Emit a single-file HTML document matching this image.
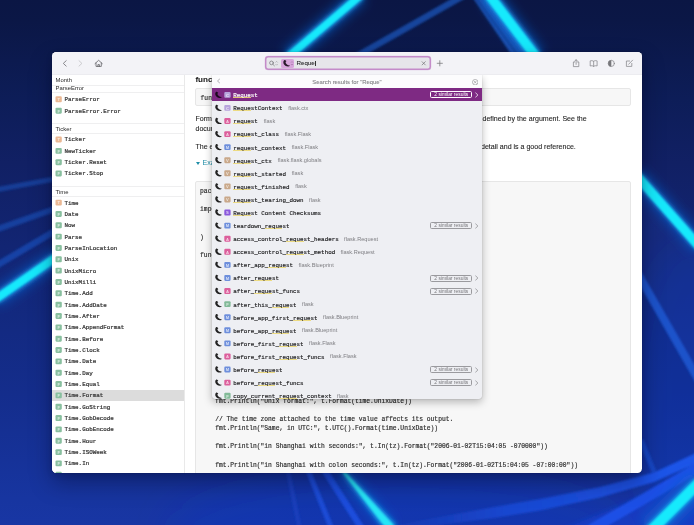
<!DOCTYPE html>
<html lang="en"><head><meta charset="utf-8"><title>Dash — Search results for "Reque"</title>
<style>
*{box-sizing:border-box}
html,body{margin:0;padding:0}
body{width:694px;height:525px;overflow:hidden;position:relative;background:#0f2890;font-family:"Liberation Sans",sans-serif}
.bg{position:absolute;left:0;top:0;display:block}
.win{position:absolute;left:52px;top:52px;width:590px;height:420.8px;border-radius:4.5px;background:#fff;overflow:hidden;box-shadow:0 10px 22px rgba(0,0,25,.34),0 2px 6px rgba(0,0,25,.14),0 0 1px rgba(0,0,0,.45)}
.abs{position:absolute;left:-52px;top:-52px;width:694px;height:525px;will-change:transform;opacity:.999}
.tb{position:absolute;left:52px;top:52px;width:590px;height:22.5px;background:#f3f3f7;border-bottom:0.6px solid #ececf0}
.tb svg{position:absolute;overflow:visible}
.srch{position:absolute;left:265px;top:56.4px;width:165.6px;height:14px;border-radius:3.2px;background:#e6e6ea;box-shadow:inset 0 0 0 1.45px #c48cc9,0 0 0 .3px rgba(197,143,202,.45)}
.tok{position:absolute;left:281.1px;top:59.1px;width:12.9px;height:8.5px;border-radius:1.6px;background:#d8a6dc}
.q{position:absolute;left:296.5px;top:59.4px;font-size:6.2px;line-height:8px;color:#1c1c1e;-webkit-text-stroke:.06px #222;white-space:nowrap}
.cur{position:absolute;left:314.7px;top:60.5px;width:.55px;height:5.9px;background:rgba(20,20,20,.85)}
.sb{position:absolute;left:52px;top:74.5px;width:132.6px;height:400px;border-right:0.8px solid #e9e9e9;background:#fff}
.sh{position:absolute;left:55.6px;font-size:5.9px;line-height:8px;height:8px;color:#2a2a2a;white-space:nowrap}
.sp{position:absolute;left:52px;width:132px;height:.8px;background:#efeff0}
.si{position:absolute;left:55.6px;height:10px;line-height:10px;white-space:nowrap;font-family:"Liberation Mono",monospace;font-size:5.85px;color:#3a3a3a}
.si span{position:absolute;left:9px;top:.8px;-webkit-text-stroke:.24px #363636}
.ico{position:absolute;left:0;top:0;overflow:hidden}
.ico text{font:bold 4.1px "Liberation Sans",sans-serif;fill:#fff;fill-opacity:.72;text-anchor:middle}
.ssel{position:absolute;left:52px;width:132.2px;height:10.7px;background:#dcdcdc}
.h3{position:absolute;font-weight:bold;font-size:8.1px;line-height:10px;color:#111;white-space:nowrap}
.box{position:absolute;background:#f7f7f7;border:.7px solid #e6e6e6;border-radius:2px;overflow:hidden}
.code{position:absolute;margin:0;font-family:"Liberation Mono",monospace;font-size:6.31px;line-height:9.13px;color:#2c2c2c;-webkit-text-stroke:.17px #2c2c2c;white-space:pre}
.p{position:absolute;font-size:7.05px;line-height:10.5px;color:#1e1e1e;-webkit-text-stroke:.1px #1e1e1e;white-space:nowrap}
.ex{position:absolute;font-size:7.05px;line-height:10.5px;color:#1f8ea8;white-space:nowrap;padding-left:7px}
.tri{position:absolute;left:0;top:3.7px;width:0;height:0;border-left:2.1px solid transparent;border-right:2.1px solid transparent;border-top:3.7px solid #1f8ea8}
.pop{position:absolute;left:212px;top:75px;width:270px;height:323.5px;background:#eeeff3;overflow:hidden;box-shadow:0 3px 9px rgba(0,0,0,.28),0 0 1px rgba(0,0,0,.35);border-radius:0 0 3px 3px}
.ph{position:absolute;left:0;top:0;width:270px;height:13.3px;background:#fcfcfd}
.pt{position:absolute;left:0;top:2.9px;width:270px;text-align:center;font-size:5.9px;line-height:8px;color:#828286;-webkit-text-stroke:.08px #828286;white-space:nowrap}
.pr{position:absolute;left:0;width:270px;height:13.08px;white-space:nowrap;color:#1d1d1f}
.pr.sel{background:#7e2a83;color:#fff}
.fl{position:absolute;left:2.9px;top:3.3px;width:7.2px;height:6.4px}
.pr.sel .fl path{fill:#1a0a1c}
.pi{left:12.2px;top:3.5px;width:6.4px;height:6px}
.pn{position:absolute;left:21.2px;top:3.9px;font-family:"Liberation Mono",monospace;font-weight:normal;-webkit-text-stroke:.16px currentColor;font-size:5.86px;line-height:8px}
.pn u{text-decoration:none;background:linear-gradient(#ecd874,#ecd874) 0 5.05px/100% .9px no-repeat}
.ps{position:absolute;top:2.6px;font-size:5.6px;line-height:8px;color:#7e7e82}
.sim{position:absolute;left:218.3px;top:3.1px;width:42px;height:7px;border:.6px solid #9a9a9e;border-radius:1.6px;font-size:4.9px;line-height:5.7px;text-align:center;color:#77777b}
.pr.sel .sim{border-color:#fff;color:#fff}
.chv{position:absolute;left:263.2px;top:3.6px;width:3.4px;height:6px;color:#8a8a8e}
.pr.sel .chv{color:#fff}
</style></head>
<body>

<svg class="bg" width="694" height="525" viewBox="0 0 694 525">
<defs>
<linearGradient id="g0" x1="0" y1="0" x2="0" y2="525" gradientUnits="userSpaceOnUse">
<stop offset="0" stop-color="#0b1644"/>
<stop offset="0.04" stop-color="#0b1746"/>
<stop offset="0.19" stop-color="#0d1d58"/>
<stop offset="0.31" stop-color="#112064"/>
<stop offset="0.63" stop-color="#132a82"/>
<stop offset="0.75" stop-color="#142d8c"/>
<stop offset="0.95" stop-color="#1735a0"/>
<stop offset="1" stop-color="#1836a4"/>
</linearGradient>
<linearGradient id="gb1" x1="380" y1="0" x2="660" y2="0" gradientUnits="userSpaceOnUse"><stop offset="0" stop-color="#1a44c0" stop-opacity=".15"/><stop offset=".45" stop-color="#1a4ad6" stop-opacity=".85"/><stop offset="1" stop-color="#1c54e8"/></linearGradient>
<filter id="b5" x="-50%" y="-50%" width="200%" height="200%"><feGaussianBlur stdDeviation="18"/></filter>
<filter id="b1" x="-30%" y="-30%" width="160%" height="160%"><feGaussianBlur stdDeviation="0.9"/></filter>
<filter id="b2" x="-50%" y="-50%" width="200%" height="200%"><feGaussianBlur stdDeviation="6"/></filter>
<filter id="b4" x="-50%" y="-50%" width="200%" height="200%"><feGaussianBlur stdDeviation="2.2"/></filter>
<filter id="b3" x="-30%" y="-30%" width="160%" height="160%"><feGaussianBlur stdDeviation="0.8"/></filter>
</defs>
<rect width="694" height="525" fill="url(#g0)"/>
<ellipse cx="400" cy="535" rx="230" ry="60" fill="#0f38d8" fill-opacity=".22" filter="url(#b5)"/>
<ellipse cx="694" cy="400" rx="60" ry="160" fill="#0f38d8" fill-opacity=".18" filter="url(#b5)"/>
<!-- dim beams -->
<g filter="url(#b1)" stroke-linecap="butt" fill="none">
<line x1="470" y1="-8" x2="350" y2="60" stroke="#17459c" stroke-width="6.5"/>
<polygon points="473,-2 493,-2 535,54 511,54" fill="#1a4fae" stroke="none"/>
<line x1="476" y1="-2" x2="517" y2="54" stroke="#123a8c" stroke-width="1.6"/>
<line x1="-5" y1="190" x2="60" y2="178" stroke="#163c96" stroke-width="5"/>
<line x1="-5" y1="230" x2="60" y2="207" stroke="#173f9e" stroke-width="6"/>
<line x1="-5" y1="266.5" x2="60" y2="228" stroke="#1842a6" stroke-width="6.5"/>
<polygon points="636,266 700,378 700,250 636,180" fill="#2050c8" fill-opacity=".16" stroke="none"/>
<line x1="636" y1="270.5" x2="700" y2="382.5" stroke="#1d52ca" stroke-width="8"/>
<line x1="641" y1="440" x2="654" y2="472" stroke="#1846c4" stroke-width="5"/>
<polygon points="700,451 700,462 654,482 600,497.5 540,510.5 494,518 400,530 370,530 494,507 540,499 600,487 654,472.5" fill="url(#gb1)" stroke="none"/>
<polygon points="700,472 700,530 560,530" fill="#1246e4" fill-opacity=".4" stroke="none" filter="url(#b4)"/>
<line x1="700" y1="466.5" x2="590" y2="530" stroke="#1b50e6" stroke-width="10.5"/>
<line x1="287" y1="466" x2="300" y2="530" stroke="#1a44c4" stroke-opacity=".6" stroke-width="4.5"/>
<line x1="306.4" y1="466" x2="332.1" y2="530" stroke="#1b4cd6" stroke-width="5.2"/>
<line x1="321.9" y1="466" x2="362.7" y2="530" stroke="#1c4edc" stroke-width="6.4"/>
</g>
<!-- outer glow -->
<g filter="url(#b2)" fill="none" stroke="#125fd0" stroke-opacity="0.7">
<line x1="361" y1="-5" x2="288" y2="57" stroke-width="15"/>
<line x1="489" y1="-5" x2="536.2" y2="57" stroke-width="18"/>
<line x1="-5" y1="299.5" x2="60" y2="255" stroke-width="16"/>
<line x1="636" y1="175" x2="700" y2="247" stroke-width="16"/>
<line x1="343" y1="472" x2="389.5" y2="526" stroke-width="12"/>
<line x1="700" y1="481.7" x2="650" y2="531.7" stroke-width="28"/>
</g>
<!-- inner glow -->
<g filter="url(#b4)" fill="none" stroke="#189ae8" stroke-opacity="0.9">
<line x1="361" y1="-5" x2="288" y2="57" stroke-width="10"/>
<line x1="489" y1="-5" x2="536.2" y2="57" stroke-width="12.5"/>
<line x1="-5" y1="299.5" x2="60" y2="255" stroke-width="10"/>
<line x1="636" y1="175" x2="700" y2="247" stroke-width="10"/>
<polygon points="341,472 346.4,472 398,526 381,526" fill="#189ae8" fill-opacity=".9" stroke="none"/>
<line x1="700" y1="481.7" x2="650" y2="531.7" stroke-width="14"/>
</g>
<!-- bright cores -->
<g filter="url(#b3)" fill="none" stroke="#14eafc">
<line x1="361" y1="-5" x2="288" y2="57" stroke-width="7.2"/>
<line x1="489" y1="-5" x2="536.2" y2="57" stroke-width="9.4"/>
<line x1="-5" y1="299.5" x2="60" y2="254.5" stroke-width="8"/>
<line x1="636" y1="175" x2="700" y2="247.5" stroke-width="9"/>
<polygon points="342.2,472 345.3,472 395,526.5 384.6,526.5" fill="#28e6f6" stroke="none"/>
<line x1="700" y1="481.7" x2="650" y2="531.7" stroke-width="10.5"/>
</g>
</svg>

<div class="win"><div class="abs">
<div class="sb"></div>
<div class="sh" style="top:76.40px">Month</div>
<div class="sp" style="top:84.60px"></div>
<div class="sh" style="top:84.20px">ParseError</div>
<div class="sp" style="top:91.90px"></div>
<div class="si" style="top:94.30px"><span style="top:0.66px">ParseError</span></div>
<div class="si" style="top:105.70px"><span style="top:1.26px">ParseError.Error</span></div>
<div class="sp" style="top:123.00px"></div>
<div class="sh" style="top:124.60px">Ticker</div>
<div class="sp" style="top:133.00px"></div>
<div class="si" style="top:134.50px"><span style="top:0.46px">Ticker</span></div>
<div class="si" style="top:145.84px"><span style="top:1.12px">NewTicker</span></div>
<div class="si" style="top:157.18px"><span style="top:0.78px">Ticker.Reset</span></div>
<div class="si" style="top:168.52px"><span style="top:0.44px">Ticker.Stop</span></div>
<div class="sp" style="top:186.00px"></div>
<div class="sh" style="top:187.80px">Time</div>
<div class="sp" style="top:195.90px"></div>
<div class="si" style="top:197.60px"><span style="top:1.36px">Time</span></div>
<div class="si" style="top:208.94px"><span style="top:1.02px">Date</span></div>
<div class="si" style="top:220.28px"><span style="top:0.68px">Now</span></div>
<div class="si" style="top:231.62px"><span style="top:1.34px">Parse</span></div>
<div class="si" style="top:242.96px"><span style="top:1.00px">ParseInLocation</span></div>
<div class="si" style="top:254.30px"><span style="top:0.66px">Unix</span></div>
<div class="si" style="top:265.64px"><span style="top:1.32px">UnixMicro</span></div>
<div class="si" style="top:276.98px"><span style="top:0.98px">UnixMilli</span></div>
<div class="si" style="top:288.32px"><span style="top:0.64px">Time.Add</span></div>
<div class="si" style="top:299.66px"><span style="top:1.30px">Time.AddDate</span></div>
<div class="si" style="top:311.00px"><span style="top:0.96px">Time.After</span></div>
<div class="si" style="top:322.34px"><span style="top:0.62px">Time.AppendFormat</span></div>
<div class="si" style="top:333.68px"><span style="top:1.28px">Time.Before</span></div>
<div class="si" style="top:345.02px"><span style="top:0.94px">Time.Clock</span></div>
<div class="si" style="top:356.36px"><span style="top:0.60px">Time.Date</span></div>
<div class="si" style="top:367.70px"><span style="top:1.26px">Time.Day</span></div>
<div class="si" style="top:379.04px"><span style="top:0.92px">Time.Equal</span></div>
<div class="ssel" style="top:389.98px"></div>
<div class="si" style="top:390.38px"><span style="top:0.58px">Time.Format</span></div>
<div class="si" style="top:401.72px"><span style="top:1.24px">Time.GoString</span></div>
<div class="si" style="top:413.06px"><span style="top:0.90px">Time.GobDecode</span></div>
<div class="si" style="top:424.40px"><span style="top:0.56px">Time.GobEncode</span></div>
<div class="si" style="top:435.74px"><span style="top:1.22px">Time.Hour</span></div>
<div class="si" style="top:447.08px"><span style="top:0.88px">Time.ISOWeek</span></div>
<div class="si" style="top:458.42px"><span style="top:0.54px">Time.In</span></div>
<div class="si" style="top:469.76px"><span style="top:1.20px">Time.IsDST</span></div>
<svg class="ico" width="190" height="525" viewBox="0 0 190 525"><rect x="55.5" y="96.35" width="6.3" height="5.9" rx="1.1" fill="#eab894"/><text x="58.65" y="101.15">T</text><rect x="55.5" y="107.75" width="6.3" height="5.9" rx="1.1" fill="#88bf9f"/><text x="58.65" y="112.55">F</text><rect x="55.5" y="136.55" width="6.3" height="5.9" rx="1.1" fill="#eab894"/><text x="58.65" y="141.35">T</text><rect x="55.5" y="147.89" width="6.3" height="5.9" rx="1.1" fill="#88bf9f"/><text x="58.65" y="152.69">F</text><rect x="55.5" y="159.23" width="6.3" height="5.9" rx="1.1" fill="#88bf9f"/><text x="58.65" y="164.03">F</text><rect x="55.5" y="170.57" width="6.3" height="5.9" rx="1.1" fill="#88bf9f"/><text x="58.65" y="175.37">F</text><rect x="55.5" y="199.65" width="6.3" height="5.9" rx="1.1" fill="#eab894"/><text x="58.65" y="204.45">T</text><rect x="55.5" y="210.99" width="6.3" height="5.9" rx="1.1" fill="#88bf9f"/><text x="58.65" y="215.79">F</text><rect x="55.5" y="222.33" width="6.3" height="5.9" rx="1.1" fill="#88bf9f"/><text x="58.65" y="227.13">F</text><rect x="55.5" y="233.67" width="6.3" height="5.9" rx="1.1" fill="#88bf9f"/><text x="58.65" y="238.47">F</text><rect x="55.5" y="245.01" width="6.3" height="5.9" rx="1.1" fill="#88bf9f"/><text x="58.65" y="249.81">F</text><rect x="55.5" y="256.35" width="6.3" height="5.9" rx="1.1" fill="#88bf9f"/><text x="58.65" y="261.15">F</text><rect x="55.5" y="267.69" width="6.3" height="5.9" rx="1.1" fill="#88bf9f"/><text x="58.65" y="272.49">F</text><rect x="55.5" y="279.03" width="6.3" height="5.9" rx="1.1" fill="#88bf9f"/><text x="58.65" y="283.83">F</text><rect x="55.5" y="290.37" width="6.3" height="5.9" rx="1.1" fill="#88bf9f"/><text x="58.65" y="295.17">F</text><rect x="55.5" y="301.71" width="6.3" height="5.9" rx="1.1" fill="#88bf9f"/><text x="58.65" y="306.51">F</text><rect x="55.5" y="313.05" width="6.3" height="5.9" rx="1.1" fill="#88bf9f"/><text x="58.65" y="317.85">F</text><rect x="55.5" y="324.39" width="6.3" height="5.9" rx="1.1" fill="#88bf9f"/><text x="58.65" y="329.19">F</text><rect x="55.5" y="335.73" width="6.3" height="5.9" rx="1.1" fill="#88bf9f"/><text x="58.65" y="340.53">F</text><rect x="55.5" y="347.07" width="6.3" height="5.9" rx="1.1" fill="#88bf9f"/><text x="58.65" y="351.87">F</text><rect x="55.5" y="358.41" width="6.3" height="5.9" rx="1.1" fill="#88bf9f"/><text x="58.65" y="363.21">F</text><rect x="55.5" y="369.75" width="6.3" height="5.9" rx="1.1" fill="#88bf9f"/><text x="58.65" y="374.55">F</text><rect x="55.5" y="381.09" width="6.3" height="5.9" rx="1.1" fill="#88bf9f"/><text x="58.65" y="385.89">F</text><rect x="55.5" y="392.43" width="6.3" height="5.9" rx="1.1" fill="#88bf9f"/><text x="58.65" y="397.23">F</text><rect x="55.5" y="403.77" width="6.3" height="5.9" rx="1.1" fill="#88bf9f"/><text x="58.65" y="408.57">F</text><rect x="55.5" y="415.11" width="6.3" height="5.9" rx="1.1" fill="#88bf9f"/><text x="58.65" y="419.91">F</text><rect x="55.5" y="426.45" width="6.3" height="5.9" rx="1.1" fill="#88bf9f"/><text x="58.65" y="431.25">F</text><rect x="55.5" y="437.79" width="6.3" height="5.9" rx="1.1" fill="#88bf9f"/><text x="58.65" y="442.59">F</text><rect x="55.5" y="449.13" width="6.3" height="5.9" rx="1.1" fill="#88bf9f"/><text x="58.65" y="453.93">F</text><rect x="55.5" y="460.47" width="6.3" height="5.9" rx="1.1" fill="#88bf9f"/><text x="58.65" y="465.27">F</text><rect x="55.5" y="471.81" width="6.3" height="5.9" rx="1.1" fill="#88bf9f"/><text x="58.65" y="476.61">F</text></svg>

<div class="h3" style="left:195.4px;top:74.6px">func (Time) Format</div>
<div class="box" style="left:195.2px;top:88px;width:436.3px;height:18.3px"><pre class="code" style="left:4.4px;top:4.6px">func (t Time) Format(layout string) string</pre></div>
<div class="p" style="left:195.5px;top:114.3px">Format returns a textual representation of the time value formatted according to the layout</div>
<div class="p" style="left:482.5px;top:114.3px">defined by the argument. See the</div>
<div class="p" style="left:195.5px;top:123.9px">documentation for the constant called Layout to see how to represent the layout format.</div>
<div class="p" style="left:195.5px;top:141.6px">The executable example for Time.Format demonstrates the working of the layout string in</div>
<div class="p" style="left:481px;top:141.6px">detail and is a good reference.</div>
<div class="ex" style="left:195.6px;top:158.1px"><span class="tri"></span>Example</div>
<div class="box" style="left:195.2px;top:180.5px;width:436.3px;height:320px"><pre class="code" style="left:3.9px;top:5.4px">package main

import (
    "fmt"
    "time"
)

func main() {
    // Parse a time value from a string in the standard Unix format.
    t, err := time.Parse(time.UnixDate, "Wed Feb 25 11:06:39 PST 2015")
    if err != nil { // Always check errors even if they should not happen.
        panic(err)
    }

    tz, err := time.LoadLocation("Asia/Shanghai")
    if err != nil { // Always check errors even if they should not happen.
        panic(err)
    }

    // time.Time's Stringer method is useful without any format.
    fmt.Println("default format:", t)

    // Predefined constants in the package implement common layouts.
    fmt.Println("Unix format:", t.Format(time.UnixDate))

    // The time zone attached to the time value affects its output.
    fmt.Println("Same, in UTC:", t.UTC().Format(time.UnixDate))

    fmt.Println("in Shanghai with seconds:", t.In(tz).Format("2006-01-02T15:04:05 -070000"))

    fmt.Println("in Shanghai with colon seconds:", t.In(tz).Format("2006-01-02T15:04:05 -07:00:00"))

    // The rest of this function demonstrates the properties of the</pre></div>

<div class="pop">
<div class="ph"></div>
<svg style="position:absolute;left:4.6px;top:3.4px;width:3.4px;height:6px" viewBox="0 0 6 10"><path d="M5 1 L1 5 L5 9" fill="none" stroke="#8a8a8e" stroke-width="1.2" stroke-linecap="round" stroke-linejoin="round"/></svg>
<div class="pt">Search results for "Reque"</div>
<svg style="position:absolute;left:259.6px;top:3.6px;width:6.4px;height:6.4px" viewBox="0 0 10 10"><circle cx="5" cy="5" r="4.3" fill="none" stroke="#8a8a8e" stroke-width=".9"/><path d="M3.4 3.4 L6.6 6.6 M6.6 3.4 L3.4 6.6" stroke="#8a8a8e" stroke-width=".9" stroke-linecap="round"/></svg>
<div class="pr sel" style="top:13.30px"><span class="pn" style="top:3.66px"><u>Reque</u>st</span><span class="sim">2 similar results</span><svg class="chv" viewBox="0 0 6 10"><path d="M1 1 L5 5 L1 9" fill="none" stroke="currentColor" stroke-width="1.3" stroke-linecap="round" stroke-linejoin="round"/></svg></div>
<div class="pr" style="top:26.38px"><span class="pn" style="top:3.58px"><u>Reque</u>stContext</span><span class="ps" style="left:76.2px">flask.ctx</span></div>
<div class="pr" style="top:39.46px"><span class="pn" style="top:3.50px"><u>reque</u>st</span><span class="ps" style="left:51.7px">flask</span></div>
<div class="pr" style="top:52.54px"><span class="pn" style="top:3.42px"><u>reque</u>st_class</span><span class="ps" style="left:72.7px">flask.Flask</span></div>
<div class="pr" style="top:65.62px"><span class="pn" style="top:4.34px"><u>reque</u>st_context</span><span class="ps" style="left:79.7px">flask.Flask</span></div>
<div class="pr" style="top:78.70px"><span class="pn" style="top:4.26px"><u>reque</u>st_ctx</span><span class="ps" style="left:65.7px">flask.flask.globals</span></div>
<div class="pr" style="top:91.78px"><span class="pn" style="top:4.18px"><u>reque</u>st_started</span><span class="ps" style="left:79.7px">flask</span></div>
<div class="pr" style="top:104.86px"><span class="pn" style="top:4.10px"><u>reque</u>st_finished</span><span class="ps" style="left:83.2px">flask</span></div>
<div class="pr" style="top:117.94px"><span class="pn" style="top:4.02px"><u>reque</u>st_tearing_down</span><span class="ps" style="left:97.1px">flask</span></div>
<div class="pr" style="top:131.02px"><span class="pn" style="top:3.94px"><u>Reque</u>st Content Checksums</span></div>
<div class="pr" style="top:144.10px"><span class="pn" style="top:3.86px">teardown_<u>reque</u>st</span><span class="sim">2 similar results</span><svg class="chv" viewBox="0 0 6 10"><path d="M1 1 L5 5 L1 9" fill="none" stroke="currentColor" stroke-width="1.3" stroke-linecap="round" stroke-linejoin="round"/></svg></div>
<div class="pr" style="top:157.18px"><span class="pn" style="top:3.78px">access_control_<u>reque</u>st_headers</span><span class="ps" style="left:132.1px">flask.Request</span></div>
<div class="pr" style="top:170.26px"><span class="pn" style="top:3.70px">access_control_<u>reque</u>st_method</span><span class="ps" style="left:128.6px">flask.Request</span></div>
<div class="pr" style="top:183.34px"><span class="pn" style="top:3.62px">after_app_<u>reque</u>st</span><span class="ps" style="left:86.6px">flask.Blueprint</span></div>
<div class="pr" style="top:196.42px"><span class="pn" style="top:3.54px">after_<u>reque</u>st</span><span class="sim">2 similar results</span><svg class="chv" viewBox="0 0 6 10"><path d="M1 1 L5 5 L1 9" fill="none" stroke="currentColor" stroke-width="1.3" stroke-linecap="round" stroke-linejoin="round"/></svg></div>
<div class="pr" style="top:209.50px"><span class="pn" style="top:3.46px">after_<u>reque</u>st_funcs</span><span class="sim">2 similar results</span><svg class="chv" viewBox="0 0 6 10"><path d="M1 1 L5 5 L1 9" fill="none" stroke="currentColor" stroke-width="1.3" stroke-linecap="round" stroke-linejoin="round"/></svg></div>
<div class="pr" style="top:222.58px"><span class="pn" style="top:4.38px">after_this_<u>reque</u>st</span><span class="ps" style="left:90.1px">flask</span></div>
<div class="pr" style="top:235.66px"><span class="pn" style="top:4.30px">before_app_first_<u>reque</u>st</span><span class="ps" style="left:111.1px">flask.Blueprint</span></div>
<div class="pr" style="top:248.74px"><span class="pn" style="top:4.22px">before_app_<u>reque</u>st</span><span class="ps" style="left:90.1px">flask.Blueprint</span></div>
<div class="pr" style="top:261.82px"><span class="pn" style="top:4.14px">before_first_<u>reque</u>st</span><span class="ps" style="left:97.1px">flask.Flask</span></div>
<div class="pr" style="top:274.90px"><span class="pn" style="top:4.06px">before_first_<u>reque</u>st_funcs</span><span class="ps" style="left:118.1px">flask.Flask</span></div>
<div class="pr" style="top:287.98px"><span class="pn" style="top:3.98px">before_<u>reque</u>st</span><span class="sim">2 similar results</span><svg class="chv" viewBox="0 0 6 10"><path d="M1 1 L5 5 L1 9" fill="none" stroke="currentColor" stroke-width="1.3" stroke-linecap="round" stroke-linejoin="round"/></svg></div>
<div class="pr" style="top:301.06px"><span class="pn" style="top:3.90px">before_<u>reque</u>st_funcs</span><span class="sim">2 similar results</span><svg class="chv" viewBox="0 0 6 10"><path d="M1 1 L5 5 L1 9" fill="none" stroke="currentColor" stroke-width="1.3" stroke-linecap="round" stroke-linejoin="round"/></svg></div>
<div class="pr" style="top:314.14px"><span class="pn" style="top:3.82px">copy_current_<u>reque</u>st_context</span><span class="ps" style="left:125.1px">flask</span></div>
<svg class="ico" width="270" height="324" viewBox="0 0 270 324"><path transform="translate(2.9 16.64) scale(.1)" fill="#1a0a1c" d="M15 0C22 0 30 6 34 13C31 15 27 17 25 21C27 33 38 47 52 50C58 51.5 64 52 70 54C66 60 58 63 50 63C30 63 12 52 6 36C3 28 2 20 5 12C7 6 10 1 15 0Z"/><rect x="12.3" y="16.89" width="6.3" height="5.9" rx="1.1" fill="#b7a4dc"/><text x="15.45" y="21.69">C</text><path transform="translate(2.9 29.72) scale(.1)" fill="#222" d="M15 0C22 0 30 6 34 13C31 15 27 17 25 21C27 33 38 47 52 50C58 51.5 64 52 70 54C66 60 58 63 50 63C30 63 12 52 6 36C3 28 2 20 5 12C7 6 10 1 15 0Z"/><rect x="12.3" y="29.97" width="6.3" height="5.9" rx="1.1" fill="#b7a4dc"/><text x="15.45" y="34.77">C</text><path transform="translate(2.9 42.80) scale(.1)" fill="#222" d="M15 0C22 0 30 6 34 13C31 15 27 17 25 21C27 33 38 47 52 50C58 51.5 64 52 70 54C66 60 58 63 50 63C30 63 12 52 6 36C3 28 2 20 5 12C7 6 10 1 15 0Z"/><rect x="12.3" y="43.05" width="6.3" height="5.9" rx="1.1" fill="#dc5f9c"/><text x="15.45" y="47.85">A</text><path transform="translate(2.9 55.88) scale(.1)" fill="#222" d="M15 0C22 0 30 6 34 13C31 15 27 17 25 21C27 33 38 47 52 50C58 51.5 64 52 70 54C66 60 58 63 50 63C30 63 12 52 6 36C3 28 2 20 5 12C7 6 10 1 15 0Z"/><rect x="12.3" y="56.13" width="6.3" height="5.9" rx="1.1" fill="#dc5f9c"/><text x="15.45" y="60.93">A</text><path transform="translate(2.9 68.96) scale(.1)" fill="#222" d="M15 0C22 0 30 6 34 13C31 15 27 17 25 21C27 33 38 47 52 50C58 51.5 64 52 70 54C66 60 58 63 50 63C30 63 12 52 6 36C3 28 2 20 5 12C7 6 10 1 15 0Z"/><rect x="12.3" y="69.21" width="6.3" height="5.9" rx="1.1" fill="#6e8fdc"/><text x="15.45" y="74.01">M</text><path transform="translate(2.9 82.04) scale(.1)" fill="#222" d="M15 0C22 0 30 6 34 13C31 15 27 17 25 21C27 33 38 47 52 50C58 51.5 64 52 70 54C66 60 58 63 50 63C30 63 12 52 6 36C3 28 2 20 5 12C7 6 10 1 15 0Z"/><rect x="12.3" y="82.29" width="6.3" height="5.9" rx="1.1" fill="#c9a88a"/><text x="15.45" y="87.09">V</text><path transform="translate(2.9 95.12) scale(.1)" fill="#222" d="M15 0C22 0 30 6 34 13C31 15 27 17 25 21C27 33 38 47 52 50C58 51.5 64 52 70 54C66 60 58 63 50 63C30 63 12 52 6 36C3 28 2 20 5 12C7 6 10 1 15 0Z"/><rect x="12.3" y="95.37" width="6.3" height="5.9" rx="1.1" fill="#c9a88a"/><text x="15.45" y="100.17">V</text><path transform="translate(2.9 108.20) scale(.1)" fill="#222" d="M15 0C22 0 30 6 34 13C31 15 27 17 25 21C27 33 38 47 52 50C58 51.5 64 52 70 54C66 60 58 63 50 63C30 63 12 52 6 36C3 28 2 20 5 12C7 6 10 1 15 0Z"/><rect x="12.3" y="108.45" width="6.3" height="5.9" rx="1.1" fill="#c9a88a"/><text x="15.45" y="113.25">V</text><path transform="translate(2.9 121.28) scale(.1)" fill="#222" d="M15 0C22 0 30 6 34 13C31 15 27 17 25 21C27 33 38 47 52 50C58 51.5 64 52 70 54C66 60 58 63 50 63C30 63 12 52 6 36C3 28 2 20 5 12C7 6 10 1 15 0Z"/><rect x="12.3" y="121.53" width="6.3" height="5.9" rx="1.1" fill="#c9a88a"/><text x="15.45" y="126.33">V</text><path transform="translate(2.9 134.36) scale(.1)" fill="#222" d="M15 0C22 0 30 6 34 13C31 15 27 17 25 21C27 33 38 47 52 50C58 51.5 64 52 70 54C66 60 58 63 50 63C30 63 12 52 6 36C3 28 2 20 5 12C7 6 10 1 15 0Z"/><rect x="12.3" y="134.61" width="6.3" height="5.9" rx="1.1" fill="#8a58dc"/><text x="15.45" y="139.41">S</text><path transform="translate(2.9 147.44) scale(.1)" fill="#222" d="M15 0C22 0 30 6 34 13C31 15 27 17 25 21C27 33 38 47 52 50C58 51.5 64 52 70 54C66 60 58 63 50 63C30 63 12 52 6 36C3 28 2 20 5 12C7 6 10 1 15 0Z"/><rect x="12.3" y="147.69" width="6.3" height="5.9" rx="1.1" fill="#6e8fdc"/><text x="15.45" y="152.49">M</text><path transform="translate(2.9 160.52) scale(.1)" fill="#222" d="M15 0C22 0 30 6 34 13C31 15 27 17 25 21C27 33 38 47 52 50C58 51.5 64 52 70 54C66 60 58 63 50 63C30 63 12 52 6 36C3 28 2 20 5 12C7 6 10 1 15 0Z"/><rect x="12.3" y="160.77" width="6.3" height="5.9" rx="1.1" fill="#dc5f9c"/><text x="15.45" y="165.57">A</text><path transform="translate(2.9 173.60) scale(.1)" fill="#222" d="M15 0C22 0 30 6 34 13C31 15 27 17 25 21C27 33 38 47 52 50C58 51.5 64 52 70 54C66 60 58 63 50 63C30 63 12 52 6 36C3 28 2 20 5 12C7 6 10 1 15 0Z"/><rect x="12.3" y="173.85" width="6.3" height="5.9" rx="1.1" fill="#dc5f9c"/><text x="15.45" y="178.65">A</text><path transform="translate(2.9 186.68) scale(.1)" fill="#222" d="M15 0C22 0 30 6 34 13C31 15 27 17 25 21C27 33 38 47 52 50C58 51.5 64 52 70 54C66 60 58 63 50 63C30 63 12 52 6 36C3 28 2 20 5 12C7 6 10 1 15 0Z"/><rect x="12.3" y="186.93" width="6.3" height="5.9" rx="1.1" fill="#6e8fdc"/><text x="15.45" y="191.73">M</text><path transform="translate(2.9 199.76) scale(.1)" fill="#222" d="M15 0C22 0 30 6 34 13C31 15 27 17 25 21C27 33 38 47 52 50C58 51.5 64 52 70 54C66 60 58 63 50 63C30 63 12 52 6 36C3 28 2 20 5 12C7 6 10 1 15 0Z"/><rect x="12.3" y="200.01" width="6.3" height="5.9" rx="1.1" fill="#6e8fdc"/><text x="15.45" y="204.81">M</text><path transform="translate(2.9 212.84) scale(.1)" fill="#222" d="M15 0C22 0 30 6 34 13C31 15 27 17 25 21C27 33 38 47 52 50C58 51.5 64 52 70 54C66 60 58 63 50 63C30 63 12 52 6 36C3 28 2 20 5 12C7 6 10 1 15 0Z"/><rect x="12.3" y="213.09" width="6.3" height="5.9" rx="1.1" fill="#dc5f9c"/><text x="15.45" y="217.89">A</text><path transform="translate(2.9 225.92) scale(.1)" fill="#222" d="M15 0C22 0 30 6 34 13C31 15 27 17 25 21C27 33 38 47 52 50C58 51.5 64 52 70 54C66 60 58 63 50 63C30 63 12 52 6 36C3 28 2 20 5 12C7 6 10 1 15 0Z"/><rect x="12.3" y="226.17" width="6.3" height="5.9" rx="1.1" fill="#82ba98"/><text x="15.45" y="230.97">F</text><path transform="translate(2.9 239.00) scale(.1)" fill="#222" d="M15 0C22 0 30 6 34 13C31 15 27 17 25 21C27 33 38 47 52 50C58 51.5 64 52 70 54C66 60 58 63 50 63C30 63 12 52 6 36C3 28 2 20 5 12C7 6 10 1 15 0Z"/><rect x="12.3" y="239.25" width="6.3" height="5.9" rx="1.1" fill="#6e8fdc"/><text x="15.45" y="244.05">M</text><path transform="translate(2.9 252.08) scale(.1)" fill="#222" d="M15 0C22 0 30 6 34 13C31 15 27 17 25 21C27 33 38 47 52 50C58 51.5 64 52 70 54C66 60 58 63 50 63C30 63 12 52 6 36C3 28 2 20 5 12C7 6 10 1 15 0Z"/><rect x="12.3" y="252.33" width="6.3" height="5.9" rx="1.1" fill="#6e8fdc"/><text x="15.45" y="257.13">M</text><path transform="translate(2.9 265.16) scale(.1)" fill="#222" d="M15 0C22 0 30 6 34 13C31 15 27 17 25 21C27 33 38 47 52 50C58 51.5 64 52 70 54C66 60 58 63 50 63C30 63 12 52 6 36C3 28 2 20 5 12C7 6 10 1 15 0Z"/><rect x="12.3" y="265.41" width="6.3" height="5.9" rx="1.1" fill="#6e8fdc"/><text x="15.45" y="270.21">M</text><path transform="translate(2.9 278.24) scale(.1)" fill="#222" d="M15 0C22 0 30 6 34 13C31 15 27 17 25 21C27 33 38 47 52 50C58 51.5 64 52 70 54C66 60 58 63 50 63C30 63 12 52 6 36C3 28 2 20 5 12C7 6 10 1 15 0Z"/><rect x="12.3" y="278.49" width="6.3" height="5.9" rx="1.1" fill="#dc5f9c"/><text x="15.45" y="283.29">A</text><path transform="translate(2.9 291.32) scale(.1)" fill="#222" d="M15 0C22 0 30 6 34 13C31 15 27 17 25 21C27 33 38 47 52 50C58 51.5 64 52 70 54C66 60 58 63 50 63C30 63 12 52 6 36C3 28 2 20 5 12C7 6 10 1 15 0Z"/><rect x="12.3" y="291.57" width="6.3" height="5.9" rx="1.1" fill="#6e8fdc"/><text x="15.45" y="296.37">M</text><path transform="translate(2.9 304.40) scale(.1)" fill="#222" d="M15 0C22 0 30 6 34 13C31 15 27 17 25 21C27 33 38 47 52 50C58 51.5 64 52 70 54C66 60 58 63 50 63C30 63 12 52 6 36C3 28 2 20 5 12C7 6 10 1 15 0Z"/><rect x="12.3" y="304.65" width="6.3" height="5.9" rx="1.1" fill="#dc5f9c"/><text x="15.45" y="309.45">A</text><path transform="translate(2.9 317.48) scale(.1)" fill="#222" d="M15 0C22 0 30 6 34 13C31 15 27 17 25 21C27 33 38 47 52 50C58 51.5 64 52 70 54C66 60 58 63 50 63C30 63 12 52 6 36C3 28 2 20 5 12C7 6 10 1 15 0Z"/><rect x="12.3" y="317.73" width="6.3" height="5.9" rx="1.1" fill="#82ba98"/><text x="15.45" y="322.53">F</text></svg>
</div>

<div class="tb"></div>
<svg class="ti" style="position:absolute;left:0;top:0" width="694" height="80" viewBox="0 0 694 80" fill="none" stroke-linecap="round" stroke-linejoin="round">
<path d="M66.2 60.7 L63.3 63.4 L66.2 66.1" stroke="#7c7c80" stroke-width=".9"/>
<path d="M79 60.7 L81.9 63.4 L79 66.1" stroke="#c6c6ca" stroke-width=".9"/>
<path d="M95 63.6 L98.65 60.3 L102.3 63.6 M96 63 V66.4 H101.3 V63 M97.9 66.4 V64.6 H99.4 V66.4" stroke="#5a5a5e" stroke-width=".75"/>
<path d="M437.2 63.3 H442.4 M439.8 60.7 V65.9" stroke="#7c7c80" stroke-width=".8"/>
<!-- share -->
<path d="M574.6 62 H573.4 V66.6 H578.8 V62 H577.6 M576.1 64.4 V59.8 M574.6 61.2 L576.1 59.7 L577.6 61.2" stroke="#858589" stroke-width=".75"/>
<!-- book -->
<path d="M593.65 61.3 C592.6 60.5 591.3 60.5 590.2 60.9 V66 C591.3 65.6 592.6 65.6 593.65 66.4 C594.7 65.6 596 65.6 597.1 66 V60.9 C596 60.5 594.7 60.5 593.65 61.3 V66.4" stroke="#858589" stroke-width=".75"/>
<!-- contrast -->
<circle cx="611.3" cy="63.4" r="3.1" stroke="#858589" stroke-width=".75"/>
<path d="M611.3 60.3 A3.1 3.1 0 0 0 611.3 66.5 Z" fill="#77777b" stroke="none"/>
<!-- compose -->
<path d="M629.6 61 H626.4 V66.4 H631.8 V63.4 M628.6 64.3 L632.6 60.2" stroke="#858589" stroke-width=".75"/>
</svg>
<div class="srch"></div>
<svg style="position:absolute;left:0;top:0" width="694" height="80" viewBox="0 0 694 80" fill="none" stroke-linecap="round" stroke-linejoin="round">
<circle cx="271.5" cy="62.9" r="1.85" stroke="#77777b" stroke-width=".75"/>
<path d="M272.9 64.3 L274.4 65.8" stroke="#77777b" stroke-width=".75"/>
<path d="M275.8 62.2 L276.6 61.4 L277.4 62.2 M275.8 64.4 L276.6 65.2 L277.4 64.4" stroke="#8c8c90" stroke-width=".55"/>
<path d="M422.1 61.7 L425.3 64.9 M425.3 61.7 L422.1 64.9" stroke="#6a6a6e" stroke-width=".65"/>
</svg>
<div class="tok"></div>
<svg style="position:absolute;left:282.5px;top:60.1px;width:7.4px;height:6.6px" viewBox="0 0 72 64"><path d="M15 0 C22 0 30 6 34 13 C31 15 27 17 25 21 C27 33 38 47 52 50 C58 51.5 64 52 70 54 C66 60 58 63 50 63 C30 63 12 52 6 36 C3 28 2 20 5 12 C7 6 10 1 15 0 Z" fill="#2a1a2c"/></svg>
<svg style="position:absolute;left:0;top:0" width="694" height="80" viewBox="0 0 694 80" fill="none" stroke-linecap="round" stroke-linejoin="round">
<path d="M291.2 62.4 L292 61.6 L292.8 62.4 M291.2 64.3 L292 65.1 L292.8 64.3" stroke="#8a5a8e" stroke-width=".5"/>
</svg>
<div class="q">Reque</div><div class="cur"></div>

</div></div>
</body></html>
